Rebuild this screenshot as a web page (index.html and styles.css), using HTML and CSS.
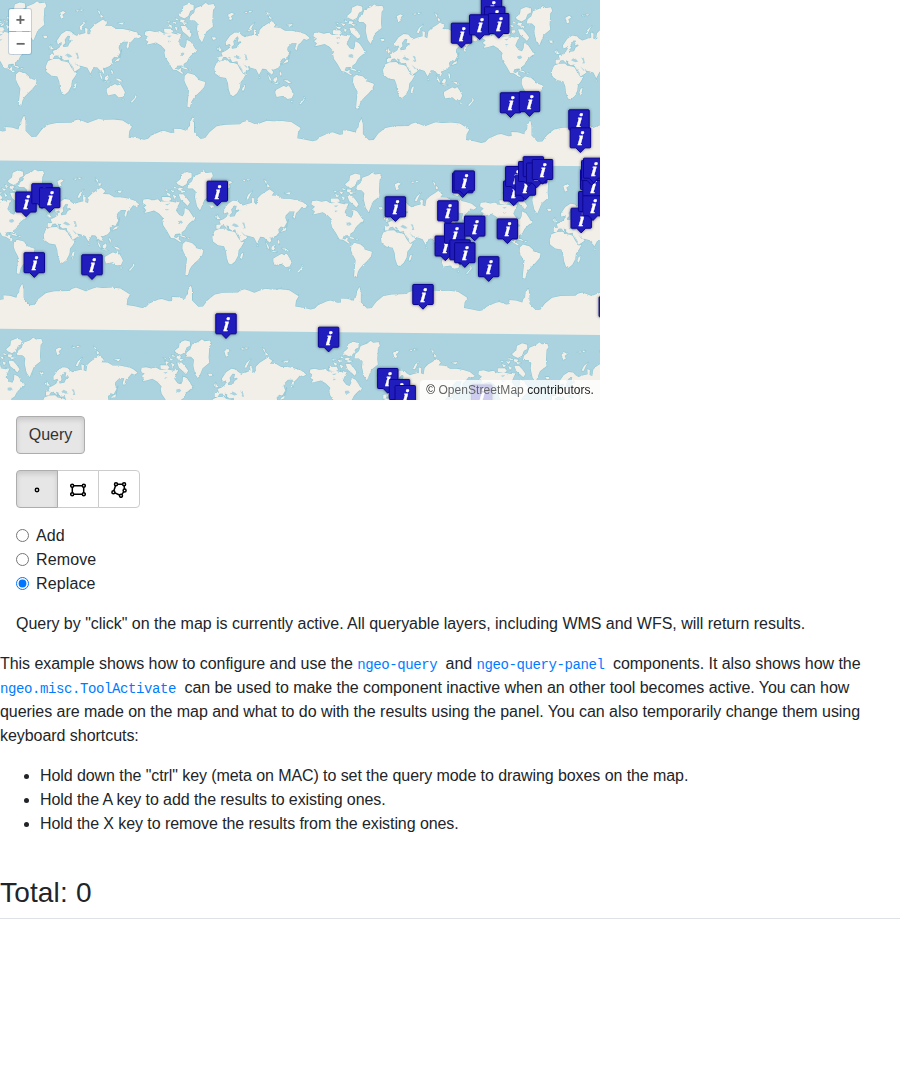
FILE: index.html
```html
<!DOCTYPE html>
<html lang="en">
<head>
<meta charset="utf-8">
<title>Query example</title>
<link rel="stylesheet" href="styles.css">
</head>
<body>
<div class="map">
  <svg class="map-canvas" width="600" height="400" viewBox="0 0 600 400">
    <defs>
      <filter id="coast" x="0" y="0" width="600" height="400" filterUnits="userSpaceOnUse" color-interpolation-filters="sRGB">
        <feTurbulence type="fractalNoise" baseFrequency="0.35" numOctaves="2" seed="4"/>
        <feDisplacementMap in="SourceGraphic" scale="2.2" xChannelSelector="R" yChannelSelector="G"/>
        <feGaussianBlur stdDeviation="0.3"/>
      </filter>
      <g id="world">
        <path d="M115 178L115 170 128 169 124 158 136 153 146 146 149 138 154 138 156 146 170 144 175 133 184 128 182 124 173 126 176 113 169 112 160 124 162 134 154 141 149 132 138 136 137 126 150 107 165 97 179 99 185 106 195 112 206 108 222 104 221 88 229 91 228 106 236 109 239 90 250 79 263 71 275 63 288 73 281 82 300 83 315 92 335 92 356 96 375 102 390 114 380 120 372 116 362 128 354 135 350 152 345 146 350 130 335 130 323 142 322 149 327 162 318 178 309 175 301 184 303 193 295 203 281 209 274 208 280 216 276 224 265 215 258 207 247 206 237 225 228 208 215 204 203 201 208 208 190 220 182 205 174 193 172 184 160 186 152 180 153 174 145 171 150 183 138 171 130 172 124 182 115 182Z"/>
        <path d="M110 188L125 182 143 181 150 188 165 190 172 193 180 208 190 222 199 220 190 236 182 246 180 263 171 280 160 289 152 286 146 268 144 250 138 234 120 231 105 220 103 205Z"/>
        <path d="M186 269L190 257 196 254 193 268 189 274ZM286 271L300 263 311 257 319 261 326 256 335 270 341 282 335 295 322 297 311 287 290 291 286 280ZM372 290L376 295 372 301 362 313 358 311 370 299ZM332 303L339 303 335 307ZM263 221L271 233 275 244 269 240ZM281 236L290 230 292 238 287 247 280 243ZM275 247L290 249 298 251 289 252ZM311 240L323 241 334 249 325 249ZM300 213L305 221 303 229 299 222ZM325 178L324 186 315 189 308 192 316 183ZM331 154L327 170 326 176ZM118 138L122 147 128 152 117 153ZM111 145L116 143 115 151ZM95 112L106 112 108 117 100 120ZM204 93L211 79 224 68 218 77 210 94ZM144 44L155 38 163 42 153 49 157 57 149 61ZM258 34L266 40 265 49ZM267 47L276 55 268 58ZM319 74L338 72 333 79ZM193 37L202 35 200 40ZM206 33L217 34 209 38ZM238 230L241 235 237 235Z"/>
        <path d="M402 99L416 97 431 101 445 98 457 105 480 104 499 108 512 105 505 120 500 132 510 145 520 149 525 139 526 124 538 130 548 145 555 158 547 164 539 171 533 178 527 190 517 197 517 209 512 201 498 202 494 211 501 214 510 208 508 218 517 225 512 226 495 215 485 214 473 193 462 177 459 162 462 155 449 141 434 132 419 136 405 139 411 130 402 124 411 116 400 109Z"/>
        <path d="M537 53L548 44 553 29 573 21 583 13 591 19 607 17 611 28 605 35 603 69 605 84 585 100 572 132 563 119 557 92 559 75 550 66 534 66Z"/>
        <path d="M501 48L514 37 516 23 532 16 547 20 547 33 537 38 531 53 519 60 506 54ZM508 83L522 83 532 94 542 108 535 118 527 110 514 99ZM458 91L480 91 486 99 477 105 459 102ZM471 77L484 83 476 88ZM483 69L496 73 490 78ZM493 59L505 66 494 65ZM508 63L521 65 515 73 506 70ZM490 84L501 89 495 97ZM514 71L529 74 517 79ZM468 68L477 70 470 73ZM500 103L511 110 502 111ZM507 205L525 208 531 214 516 210ZM532 213L541 214 538 217ZM547 152L558 154 552 164Z"/>
        <path d="M520 232L529 224 548 229 559 239 560 244 582 251 579 265 566 280 555 290 546 300 540 310 536 327 528 325 530 302 533 276 523 257 519 246Z"/>
        <path d="M24 480L24 393 30 382 31 368 39 352 42 368 42 397 60 416 75 415 89 396 110 379 135 374 180 373 187 367 200 363 212 367 229 374 244 368 261 362 280 364 307 363 334 366 348 375 362 384 354 398 352 415 377 419 398 424 410 421 420 411 447 399 458 397 479 404 489 403 488 391 508 392 527 398 530 388 536 382 537 370 544 357 548 372 548 402 566 420 566 480Z"/>
        <path class="water" d="M161 171L168 165 177 169 183 175 174 177ZM192 163L199 164 203 180 195 181 198 174ZM470 127L480 128 472 132ZM506 164L516 162 521 168 514 173 506 171ZM176 190L188 211 186 213ZM188 189L202 201 199 203ZM467 113L481 111 474 117Z"/>
      </g>
      <g id="row">
        <use href="#world" x="-1012" y="-9.6"/><use href="#world" x="-506" y="-4.8"/><use href="#world"/>
        <use href="#world" x="506" y="4.8"/><use href="#world" x="1012" y="9.6"/>
      </g>
      <g id="rows">
        <use href="#row" transform="translate(180 0) scale(.3333)"/>
        <use href="#row" transform="translate(178 168.2) scale(.3333)"/>
        <use href="#row" transform="translate(176.3 336.4) scale(.3333)"/>
      </g>
      <g id="pin">
        <path class="pin-body" d="M-9.5 .5H9.5Q10.2 .5 10.2 1.3V19.7Q10.2 20.5 9.5 20.5H4.5L0 25.2L-4.5 20.5H-9.5Q-10.2 20.5 -10.2 19.7V1.3Q-10.2 .5 -9.5 .5Z"/>
        <text class="pin-letter" transform="translate(-.3 17.9) skewX(-6)" x="0" y="0">i</text>
      </g>
    </defs>
    <rect class="ocean" width="600" height="400"/>
    <g filter="url(#coast)">
      <use class="shore" href="#rows"/>
      <use class="land" href="#rows"/>
    </g>
    <path class="ice" d="M0 146L600 150V166.3L0 160.6ZM0 314L600 318V335L0 328.8Z"/>
    <g class="pins">
      <use href="#pin" x="491.5" y="-3"/><use href="#pin" x="494.7" y="6.3"/><use href="#pin" x="461.5" y="22.7"/><use href="#pin" x="479.7" y="14.3"/><use href="#pin" x="498.7" y="13"/>
      <use href="#pin" x="510.5" y="92.3"/><use href="#pin" x="529.5" y="91.2"/><use href="#pin" x="579" y="109.3"/><use href="#pin" x="580.4" y="127.3"/>
      <use href="#pin" x="26" y="191.5"/><use href="#pin" x="42" y="183.2"/><use href="#pin" x="49.7" y="187.2"/><use href="#pin" x="217.3" y="180.7"/>
      <use href="#pin" x="34.3" y="252.2"/><use href="#pin" x="92" y="254.3"/><use href="#pin" x="226" y="313.3"/><use href="#pin" x="328.6" y="326.7"/><use href="#pin" x="423" y="284"/>
      <use href="#pin" x="395.4" y="196.3"/><use href="#pin" x="462.7" y="172.3"/><use href="#pin" x="464.2" y="170.4"/>
      <use href="#pin" x="447.9" y="200.3"/><use href="#pin" x="445.3" y="235.5"/><use href="#pin" x="454.7" y="222.7"/><use href="#pin" x="474.7" y="215.6"/><use href="#pin" x="460" y="239.3"/><use href="#pin" x="464.8" y="242.2"/><use href="#pin" x="507.4" y="218.4"/><use href="#pin" x="488.7" y="256.2"/>
      <use href="#pin" x="513.7" y="180.5"/><use href="#pin" x="515.8" y="166"/><use href="#pin" x="525.4" y="174.7"/><use href="#pin" x="528.7" y="161"/><use href="#pin" x="533.4" y="156.2"/><use href="#pin" x="536.7" y="162.5"/><use href="#pin" x="542.5" y="159"/>
      <use href="#pin" x="581.2" y="207.7"/><use href="#pin" x="588.8" y="191"/><use href="#pin" x="590.7" y="169"/><use href="#pin" x="593" y="175.5"/><use href="#pin" x="593" y="195.3"/><use href="#pin" x="591.7" y="160"/><use href="#pin" x="593.7" y="157.7"/>
      <use href="#pin" x="387.8" y="368"/><use href="#pin" x="399.5" y="379"/><use href="#pin" x="405.2" y="385"/><use href="#pin" x="481.7" y="384.5"/><use href="#pin" x="609.3" y="296.3"/>
    </g>
  </svg>
  <div class="zoom"><button class="zoom-in">+</button><button class="zoom-out">−</button></div>
  <div class="attribution">© <a>OpenStreetMap</a> contributors.</div>
</div>
<div class="controls">
  <button class="btn active query">Query</button>
  <div class="btn-group">
    <button class="btn active" aria-label="Point"><svg width="16" height="16" viewBox="0 0 16 16"><circle cx="8" cy="8" r="1.7"/></svg></button>
    <button class="btn" aria-label="Box"><svg width="16" height="16" viewBox="0 0 16 16"><path d="M2.3 3.7H13.7M2.3 12.3H13.7M2.3 3.7V12.3M13.7 3.7V12.3"/><circle cx="2.2" cy="3.7" r="1.5"/><circle cx="13.8" cy="3.7" r="1.5"/><circle cx="2.2" cy="12.2" r="1.5"/><circle cx="13.8" cy="12.2" r="1.5"/></svg></button>
    <button class="btn" aria-label="Polygon"><svg width="16" height="16" viewBox="0 0 16 16"><path d="M5 2.3H13L13.6 8.4 10 13.8 2.4 10.2Z"/><circle cx="5" cy="2.3" r="1.5"/><circle cx="13.1" cy="2.3" r="1.5"/><circle cx="13.6" cy="8.4" r="1.5"/><circle cx="10" cy="13.8" r="1.5"/><circle cx="2.4" cy="10.2" r="1.5"/></svg></button>
  </div>
  <div class="modes">
    <label><input type="radio" name="mode">Add</label>
    <label><input type="radio" name="mode">Remove</label>
    <label><input type="radio" name="mode" checked>Replace</label>
  </div>
  <p class="status">Query by "click" on the map is currently active. All queryable layers, including WMS and WFS, will return results.</p>
</div>
<p class="desc">This example shows how to configure and use the <a class="code">ngeo-query</a> and <a class="code">ngeo-query-panel</a> components. It also shows how the <a class="code">ngeo.misc.ToolActivate</a> can be used to make the component inactive when an other tool becomes active. You can how queries are made on the map and what to do with the results using the panel. You can also temporarily change them using keyboard shortcuts:</p>
<ul>
  <li>Hold down the "ctrl" key (meta on MAC) to set the query mode to drawing boxes on the map.</li>
  <li>Hold the A key to add the results to existing ones.</li>
  <li>Hold the X key to remove the results from the existing ones.</li>
</ul>
<h3>Total: 0</h3>
</body>
</html>
```

FILE: styles.css
```css
* { box-sizing: border-box; }
body { margin: 0; background: #fff; color: #212529; font: 16px/24px "Liberation Sans", Arial, sans-serif; }
p { margin: 0 0 16px; }
.status { letter-spacing: -.026px; }
.desc { letter-spacing: -.045px; }
.map { position: relative; width: 600px; height: 400px; overflow: hidden; }
.map-canvas { display: block; }
.ocean { fill: #aad3df; }
.shore { fill: #8fc6d3; stroke: #8fc6d3; stroke-width: 3.4; stroke-linejoin: round; }
.land { fill: #f2efe9; }
.land, .ice { stroke: none; }
.water { fill: #aad3df; stroke: none; }
.ice { fill: #f2efe9; }
.pins { filter: drop-shadow(0 0 1.5px rgba(0, 0, 0, .55)); }
.pin-body { fill: #211cbc; stroke: #0c0790; stroke-width: 1; }
.pin-letter { fill: #fff; stroke: #fff; stroke-width: .3; font: italic bold 20px "Liberation Serif", serif; text-anchor: middle; }
.zoom { position: absolute; left: 8px; top: 8px; width: 24px; padding: 1px; border-radius: 3px; background: rgba(0, 60, 136, .18); }
.zoom button { display: block; width: 22px; height: 22px; margin: 0; padding: 0 0 0 1px; border: 0; background: #fff; color: #666; font: bold 16px/22px "Liberation Sans", Arial, sans-serif; }
.zoom .zoom-in { margin-bottom: 1px; border-radius: 2px 2px 0 0; }
.zoom .zoom-out { padding-top: 1px; border-radius: 0 0 2px 2px; }
.attribution { position: absolute; right: 0; bottom: 0; height: 20px; padding: 0 6px; border-radius: 4px 0 0; background: rgba(255, 255, 255, .78); color: #222; font-size: 12px; line-height: 20px; letter-spacing: .055px; }
.attribution a { color: #666; }
.controls { padding: 16px 16px 0; }
.btn { height: 38px; padding: 0 12px; border: 1px solid #ccc; border-radius: 4px; background: #fff; color: #333; font: 16px/24px "Liberation Sans", Arial, sans-serif; }
.btn.active { border-color: #adadad; background: #e6e6e6; box-shadow: inset 0 3px 5px rgba(0, 0, 0, .125); }
.query { display: block; width: 69px; margin-bottom: 16px; padding: 0; letter-spacing: -.05px; }
.btn-group { display: flex; margin-bottom: 16px; }
.btn-group .btn { display: flex; align-items: center; width: 42px; border-radius: 0; }
.btn-group .btn + .btn { margin-left: -1px; }
.btn-group .btn:first-child { z-index: 1; border-radius: 4px 0 0 4px; }
.btn-group .btn:last-child { border-radius: 0 4px 4px 0; }
.btn svg { flex: none; margin-top: 2px; fill: none; stroke: #000; stroke-width: 1.5; }
.btn svg circle { fill: #fff; }
.modes { margin-bottom: 16px; letter-spacing: .12px; }
.modes label { display: flex; align-items: center; height: 24px; }
.modes input { width: 13px; height: 13px; margin: 0 7px 1px 0; accent-color: #0075ff; }
.code { margin-right: 4px; color: #007bff; font: 14px/20px "Liberation Mono", monospace; letter-spacing: -.4px; }
ul { margin: 0 0 16px; padding-left: 40px; letter-spacing: -.078px; }
h3 { margin: 40px 0 16px; padding-bottom: 8px; border-bottom: 1px solid #dee2e6; font-size: 28px; font-weight: 400; line-height: 33.6px; letter-spacing: .17px; }
```
